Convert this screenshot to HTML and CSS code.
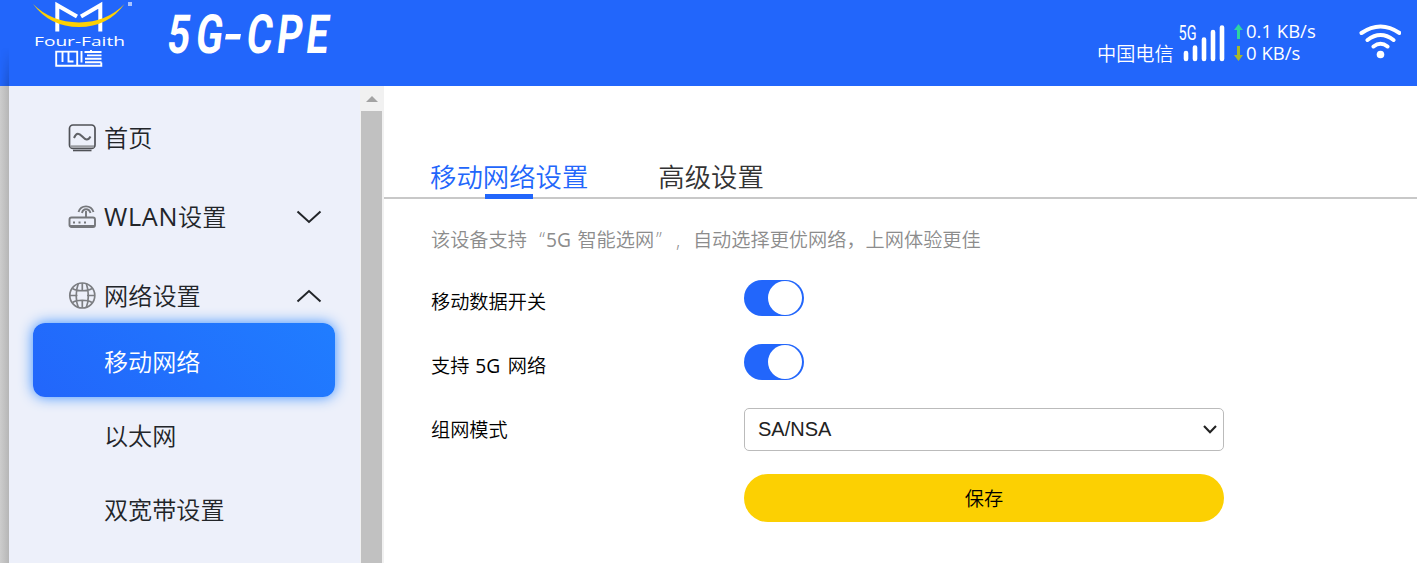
FILE: index.html
```html
<!DOCTYPE html>
<html lang="zh-CN">
<head>
<meta charset="utf-8">
<title>5G-CPE</title>
<link rel="stylesheet" href="styles.css">
</head>
<body>
<header class="header">
  <div class="header-edge"></div>
  <svg class="logo" width="120" height="86" viewBox="20 0 120 86">
    <path d="M57.300 31.500V5.200L77 16.500M100.300 31.500V5.200L81 16.500" fill="none" stroke="#fff" stroke-width="4"/>
    <path d="M33 4Q51 22 79 22.500Q107 22 124.500 4Q108 27 79 27Q50 27 33 4Z" fill="#fdd003"/>
    <rect x="128" y="2" width="4" height="4" fill="#a9c4ff"/>
    <text x="34" y="45.500" textLength="91" lengthAdjust="spacingAndGlyphs" class="logo-name">Four-Faith</text>
    <path d="M101.300 62.500V65.700H56.200V51.600H77.200V65M62.500 52V62M68.500 52V61.500H73.500M81.500 51V62.500M84.500 52H101.500M91 50V52M87 55.400H101.500M85 58.800H101.500M85 62.300H101.500" fill="none" stroke="#fff" stroke-width="1.900"/>
  </svg>
  <svg class="title" width="180" height="86" viewBox="160 0 180 86">
    <g transform="translate(168 53) skewX(-7) scale(.73 1)" class="title-text">
      <text x="-3">5</text><text x="36">G</text><text x="105.500">C</text><text x="147">P</text><text x="187">E</text>
    </g>
    <path d="M226 34H241L240 39.500H225Z" fill="#fff"/>
  </svg>
  <div class="status">
    <span class="carrier">中国电信</span>
    <svg class="signal" width="48" height="44" viewBox="0 0 48 44">
      <text x="1.500" y="21" textLength="18" lengthAdjust="spacingAndGlyphs" class="signal-label">5G</text>
      <path d="M9 34V40M18 28.500V40M27 20.500V40M36 13V40M45 8.500V40" stroke="#fff" stroke-width="4.600" stroke-linecap="round"/>
    </svg>
    <div class="rates">
      <div class="rate"><svg width="9" height="15" viewBox="0 0 9 15"><path d="M4.500 0L9 6H6V15H3V6H0Z" fill="#2ed5a0"/></svg><span>0.1 KB/s</span></div>
      <div class="rate"><svg width="9" height="15" viewBox="0 0 9 15"><path d="M4.500 15L9 9H6V0H3V9H0Z" fill="#a6b82c"/></svg><span>0 KB/s</span></div>
    </div>
    <svg class="wifi" width="42" height="38" viewBox="1359 22 42 38">
      <path d="M1361.500 33Q1380.500 20 1399.500 33M1367.500 40Q1380.500 30 1393.500 40M1373.500 46.500Q1380.500 41 1387.500 46.500" fill="none" stroke="#fff" stroke-width="4" stroke-linecap="round"/>
      <circle cx="1380.500" cy="54.500" r="3.800" fill="#fff"/>
    </svg>
  </div>
</header>
<div class="body">
  <div class="gutter"></div>
  <nav class="sidebar">
    <a class="item">
      <svg width="28" height="28" viewBox="0 0 28 28" fill="none" stroke="#505257">
        <rect x="1.500" y="1" width="25.500" height="23.500" rx="3.500" stroke-width="1.700"/>
        <path d="M2.500 22.500H26" stroke="#999ba0" stroke-width="2.400"/><path d="M5 26.500H23.500" stroke-width="1.600"/>
        <path d="M6 14C8.500 8 11 9 14.300 12.500S20 17 22.500 12.500" stroke="#606267" stroke-width="2"/>
      </svg><span class="label">首页</span>
    </a>
    <a class="item">
      <svg width="28" height="28" viewBox="0 0 28 28" fill="none" stroke="#75777b" stroke-width="1.900">
        <rect x="1.500" y="14.500" width="25.500" height="9.500" rx="2"/>
        <path d="M2 23H26.500M18 8V14.500M10.500 9C13 1.500 23 1.500 25.500 9M14 10C15 5 21 5 22.500 10"/>
        <path d="M5 19.500H7M10.500 19.500H12.500M16 19.500H18" stroke-width="2.200"/>
      </svg><span class="label label-wlan"><span class="wlan">WLAN</span>设置</span>
      <svg class="arrow" width="26" height="14" viewBox="0 0 26 14"><path d="M1.500 1.500L13 12L24.500 1.500" fill="none" stroke="#222529" stroke-width="2"/></svg>
    </a>
    <a class="item">
      <svg width="28" height="28" viewBox="0 0 28 28" fill="none" stroke="#7c7e82" stroke-width="1.700">
        <circle cx="14.300" cy="13.500" r="12.500"/>
        <path d="M14.300 1V9M14.300 18V26M2 13.500H9.500M19 13.500H26.500M10.300 1.500C7.500 9 7.500 19 10.300 25.500M18.300 1.500C21 9 21 19 18.300 25.500M4.500 6.500C9 9.500 19.500 9.500 24 6.500M4.500 20.500C9 17.500 19.500 17.500 24 20.500"/>
      </svg><span class="label">网络设置</span>
      <svg class="arrow" width="26" height="14" viewBox="0 0 26 14"><path d="M1.500 12.500L13 2L24.500 12.500" fill="none" stroke="#222529" stroke-width="2"/></svg>
    </a>
    <a class="sub sub-active">移动网络</a>
    <a class="sub">以太网</a>
    <a class="sub">双宽带设置</a>
  </nav>
  <div class="scrollbar">
    <svg class="scroll-up" width="12" height="6" viewBox="0 0 12 6"><path d="M0 6L6 0L12 6Z" fill="#a3a3a3"/></svg>
    <div class="thumb"></div>
  </div>
  <main class="main">
    <div class="tabs">
      <a class="tab tab-active">移动网络设置</a>
      <a class="tab">高级设置</a>
    </div>
    <div class="content">
      <p class="hint"><span>该设备支持</span><span class="quote">“</span><span class="quoted"><span class="latin">5G</span> 智能选网</span><span class="quote-end">”</span><span class="comma">,</span><span>自动选择更优网络，上网体验更佳</span></p>
      <div class="row"><span class="name">移动数据开关</span><span class="switch"><i class="knob"></i></span></div>
      <div class="row"><span class="name">支持 <span class="latin latin-wide">5G</span> 网络</span><span class="switch"><i class="knob"></i></span></div>
      <div class="row"><span class="name">组网模式</span>
        <div class="select"><span>SA/NSA</span>
          <svg width="14" height="9" viewBox="0 0 14 9"><path d="M1 1L7 7.300L13 1" fill="none" stroke="#222" stroke-width="2.100"/></svg>
        </div>
      </div>
      <button class="save">保存</button>
    </div>
  </main>
</div>
</body>
</html>
```

FILE: styles.css
```css
* { box-sizing: border-box; }
body {
  margin: 0;
  width: 1417px;
  height: 563px;
  overflow: hidden;
  background: #fff;
  color: #222529;
  font-family: "Open Sans", "Noto Sans CJK SC", sans-serif;
}
svg { display: block; flex: none; }

.header { display: flex; height: 86px; background: #2266fb; color: #fff; }
.header-edge {
  width: 9px;
  margin-right: 11px;
  background: linear-gradient(90deg, rgba(0,0,0,0), rgba(0,0,0,.16));
  -webkit-mask: linear-gradient(transparent 55%, #000);
  mask: linear-gradient(transparent 55%, #000);
}
.logo-name { font: 13px "Open Sans", sans-serif; fill: #fff; }
.title { margin-left: 20px; }
.title-text { font: 700 54px Roboto, sans-serif; fill: #fff; }
.status { display: flex; align-items: flex-start; margin-left: auto; padding-right: 16px; }
.carrier { margin: 40px 0 0 -1px; width: 80px; font-size: 19.200px; line-height: 28px; font-weight: 350; white-space: nowrap; }
.signal { margin-top: 19px; }
.signal-label { font: 400 21px "Roboto", sans-serif; fill: #fff; }
.rates { width: 125px; margin: 20px 0 0 9px; font-size: 18.500px; line-height: 22px; }
.rate { display: flex; align-items: center; gap: 3px; height: 22px; }
.wifi { margin-top: 22px; }

.body { display: flex; height: 477px; }
.gutter { width: 9px; background: linear-gradient(90deg, #cdcdcd, #b6b6b6); }
.sidebar { width: 351px; padding: 26px 25px 0 24px; background: #edf0fa; }
.item { display: flex; align-items: center; height: 52px; margin-bottom: 27px; padding: 0 13px 0 35px; }
.item:nth-child(3) { margin-bottom: 1px; }
.label { margin-left: 8px; font-size: 24.200px; line-height: 36px; font-weight: 350; white-space: nowrap; }
.label-wlan { padding-bottom: 2px; }
.wlan { display: inline-block; width: 74px; font-size: 25.200px; font-weight: 400; letter-spacing: .7px; }
.arrow { margin-left: auto; }
.sub { display: block; height: 74px; padding-left: 71px; padding-top: 1px; font-size: 24.100px; line-height: 75px; font-weight: 350; border-radius: 12px; }
.sub-active {
  color: #fff;
  background: linear-gradient(45deg, #2266fb, #207dff);
  box-shadow: 0 0 14px #3b8fff;
}
.scrollbar { width: 24px; padding: 10px 2px 0 1px; background: #f1f1f1; }
.scroll-up { margin: 0 auto 9px 5px; }
.thumb { height: 452px; background: #c1c1c1; }

.main { flex: 1; }
.tabs { display: flex; height: 113px; padding: 72px 0 0 46px; gap: 70px; border-bottom: 2px solid #c8c8c8; }
.tab { position: relative; font-size: 26.400px; line-height: 38px; font-weight: 350; color: #333; white-space: nowrap; }
.tab-active { color: #2266fb; }
.tab-active::after { content: ""; position: absolute; left: 55px; bottom: -2px; width: 48px; height: 5px; background: #2266fb; }
.content { width: 840px; padding: 25px 0 0 47px; }
.hint { display: flex; margin: 0 0 24px; height: 32px; font-size: 19.200px; line-height: 32px; font-weight: 350; color: #8c8c8c; white-space: nowrap; }
.latin { display: inline-block; width: 26.500px; font-weight: 400; }
.latin-wide { width: 27.500px; margin-left: 1px; }
.quote { width: 19px; padding-right: 1px; text-align: right; }
.quoted { width: 110px; }
.quote-end { width: 17px; }
.comma { width: 20px; padding-left: 3px; }
.row { display: flex; align-items: center; height: 36px; margin-bottom: 28px; color: #000; }
.name { width: 313px; padding-top: 7px; font-size: 19.200px; line-height: 30px; font-weight: 350; }
.switch { display: flex; justify-content: flex-end; align-items: center; width: 60px; height: 36px; padding-right: 2px; border-radius: 18px; background: #2266fb; }
.knob { width: 34px; height: 34px; border-radius: 50%; background: #fff; }
.select { display: flex; align-items: center; justify-content: space-between; width: 480px; height: 43px; margin-top: 7px; padding: 0 6px 1px 13px; border: 1px solid #bbb; border-radius: 5px; color: #222; font: 20px "Liberation Sans", Arial, sans-serif; }
.save { display: block; width: 480px; height: 48px; margin: 30px 0 0 313px; padding: 0; border: 0; border-radius: 24px; background: #fcd002; color: #000; font: 350 19.200px "Noto Sans CJK SC", sans-serif; }
```
